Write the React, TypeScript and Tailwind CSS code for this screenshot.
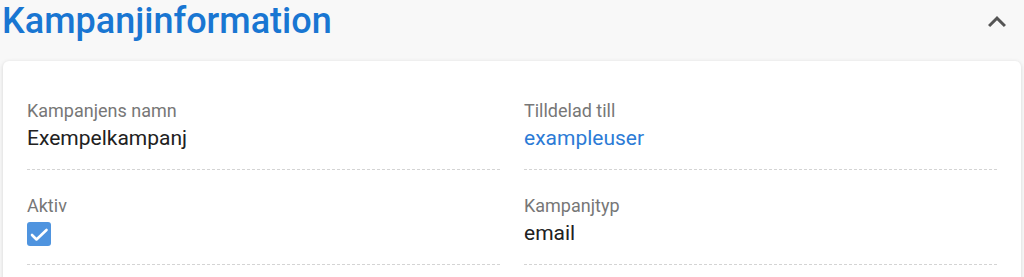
import React from 'react';

type Field = {
  label: string;
  value?: string;
  link?: boolean;
  checked?: boolean;
};

const fields: Field[] = [
  { label: 'Kampanjens namn', value: 'Exempelkampanj' },
  { label: 'Tilldelad till', value: 'exampleuser', link: true },
  { label: 'Aktiv', checked: true },
  { label: 'Kampanjtyp', value: 'email' },
];

function Checkbox({ checked }: { checked: boolean }) {
  return (
    <div className="h-[29px] pt-[4px]">
      <div
        className={`h-6 w-6 rounded-[3px] ${
          checked ? 'bg-[#4f94df]' : 'border-2 border-gray-400 bg-white'
        }`}
      >
        {checked && (
          <svg viewBox="0 0 24 24" className="h-6 w-6" fill="none">
            <path d="M5 13l4.5 4.5L19.5 8" stroke="white" strokeWidth="2.6" strokeLinecap="round" strokeLinejoin="round" />
          </svg>
        )}
      </div>
    </div>
  );
}

function FieldItem({ field }: { field: Field }) {
  return (
    <div className="border-b border-dashed border-[#d4d4d4] pt-6 pb-[17px]">
      <div className="text-[18px] leading-6 text-[#777777]">{field.label}</div>
      {field.checked !== undefined ? (
        <Checkbox checked={field.checked} />
      ) : (
        <div
          className={`mt-px text-[21px] leading-7 ${
            field.link ? 'text-[#2c7bd6]' : 'text-[#212121]'
          }`}
        >
          {field.value}
        </div>
      )}
    </div>
  );
}

export default function App() {
  return (
    <div className="h-[277px] overflow-hidden bg-[#f8f8f8] font-['Roboto',sans-serif]">
      {/* Header */}
      <div className="flex h-[61px] items-start justify-between pl-[2px] pr-[9px]">
        <h1 className="mt-px text-[36px] font-medium leading-[40px] text-[#1976d2]">
          Kampanjinformation
        </h1>
        <button className="mt-[4px] text-[#555555]">
          <svg viewBox="0 0 24 24" className="h-9 w-9" fill="currentColor">
            <path d="M12 8l-6 6 1.41 1.41L12 10.83l4.59 4.58L18 14z" />
          </svg>
        </button>
      </div>

      {/* Card */}
      <div className="mx-[3px] rounded-md bg-white px-6 pt-[14px] pb-6 shadow-[0_1px_4px_rgba(0,0,0,0.15)]">
        <div className="grid grid-cols-2 gap-x-6">
          {fields.map((f) => (
            <FieldItem key={f.label} field={f} />
          ))}
        </div>
      </div>
    </div>
  );
}
